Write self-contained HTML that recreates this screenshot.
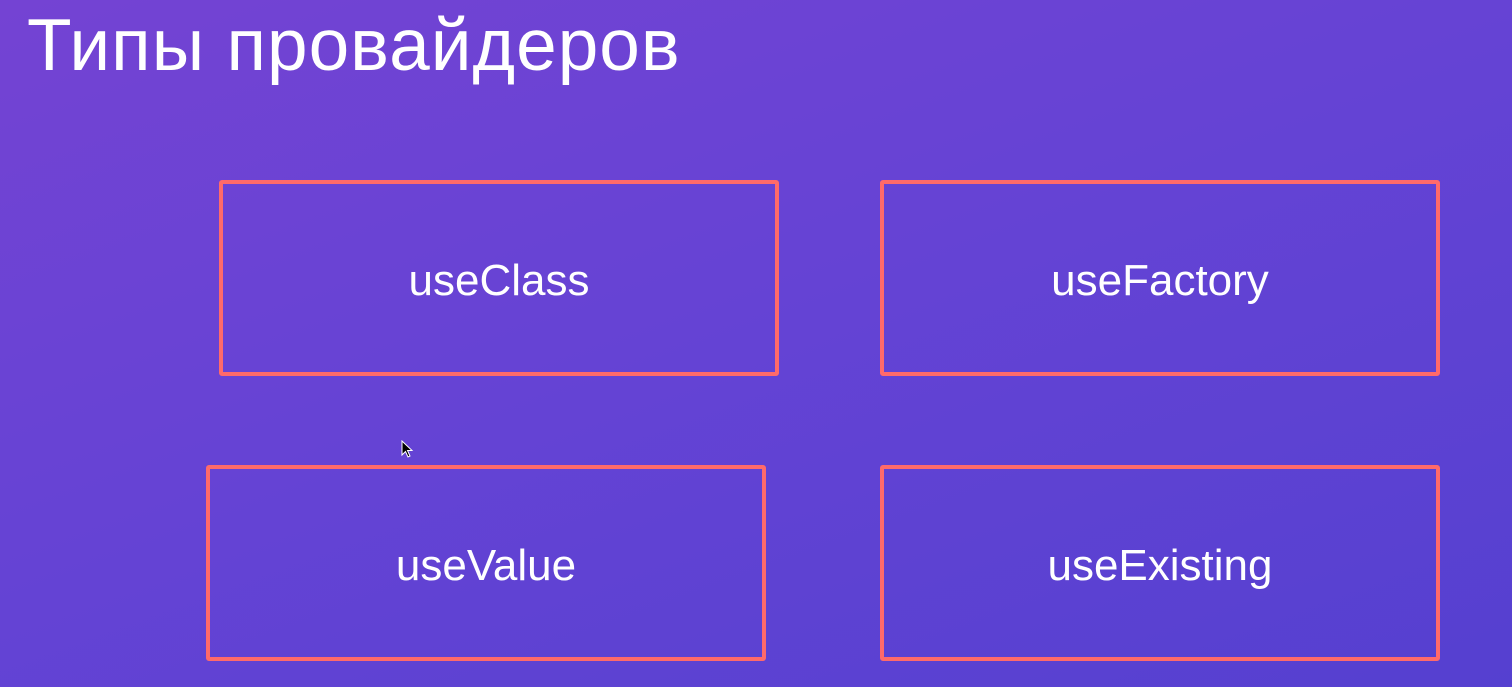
<!DOCTYPE html>
<html><head><meta charset="utf-8"><style>
html,body{margin:0;padding:0}
body{width:1512px;height:687px;overflow:hidden;position:relative;background:linear-gradient(160deg,#7443d3 0%,#6443d4 50%,#5540d0 100%);font-family:"Liberation Sans",sans-serif;color:#fff}
h1{position:absolute;left:27px;top:4px;margin:0;font-weight:400;font-size:73px;letter-spacing:1px;line-height:84px}
.b{position:absolute;width:552px;border:4px solid #ff6a6a;border-radius:3px;display:flex;align-items:center;justify-content:center;font-size:44px;padding-top:6px;box-sizing:content-box;height:182px}
</style></head><body>
<h1>Типы провайдеров</h1>
<div class="b" style="left:219px;top:180px">useClass</div>
<div class="b" style="left:880px;top:180px">useFactory</div>
<div class="b" style="left:206px;top:465px">useValue</div>
<div class="b" style="left:880px;top:465px">useExisting</div>
<svg style="position:absolute;left:401px;top:440px" width="14" height="20"><path d="M1 1 L1 15 L4.5 11.5 L7 17 L9 16 L6.5 10.5 L11 10.5 Z" fill="#000" stroke="#fff" stroke-width="1"/></svg>
</body></html>
